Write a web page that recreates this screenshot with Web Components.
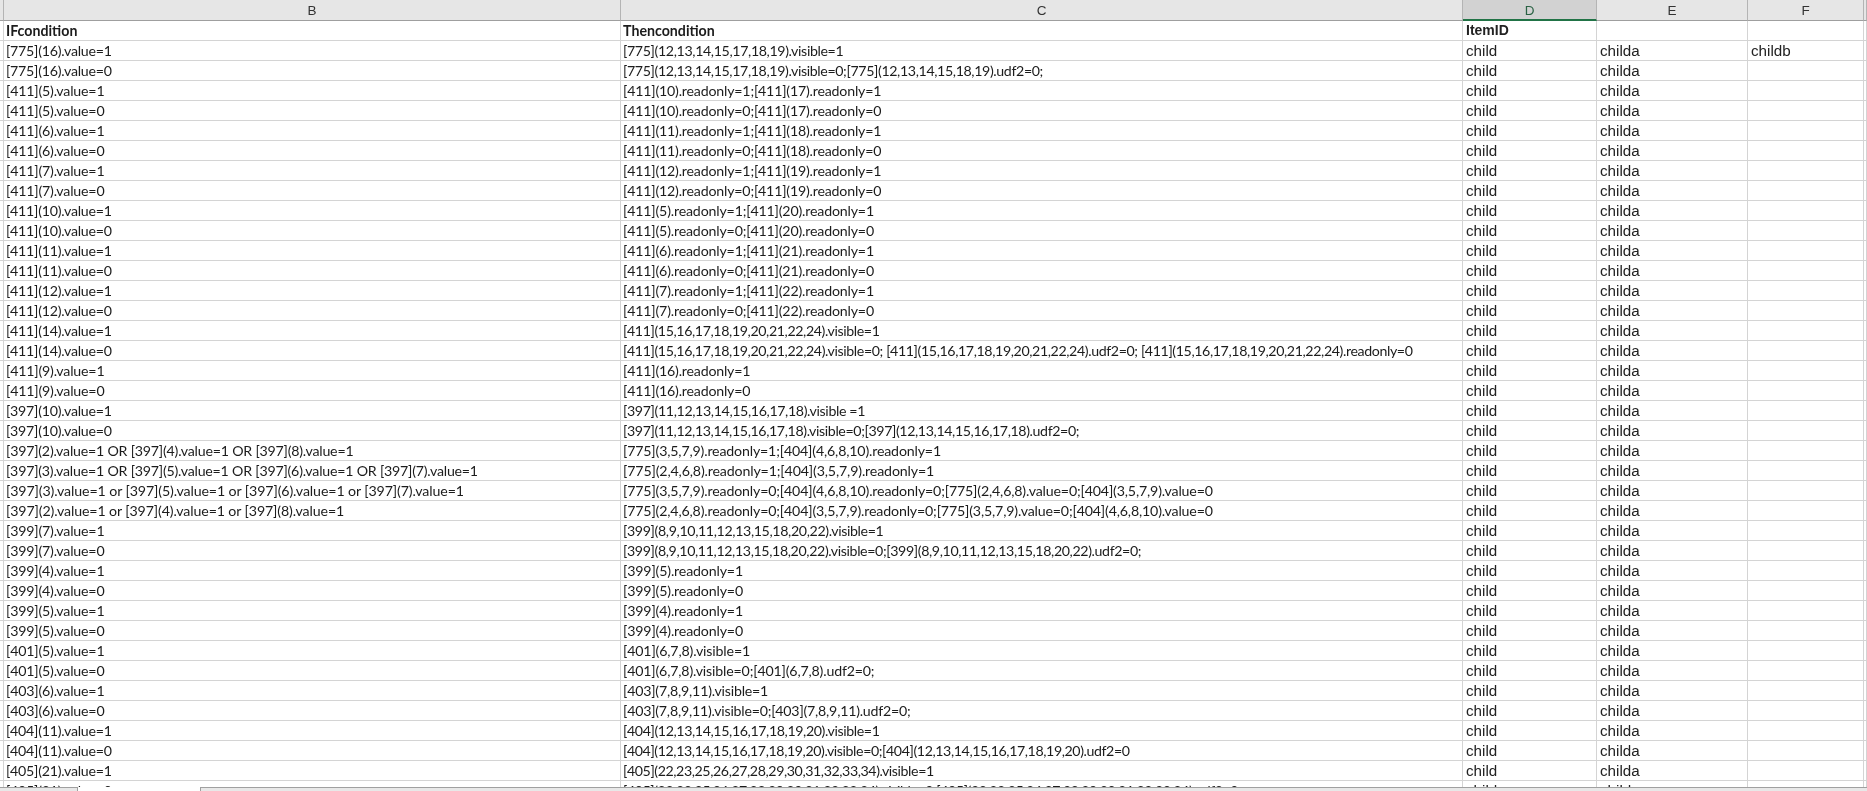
<!DOCTYPE html>
<html><head><meta charset="utf-8"><title>Sheet</title>
<style>html,body{margin:0;padding:0;background:#fff;overflow:hidden}</style>
</head><body>
<x-sheet id="sheet"></x-sheet>
<script>
const COLS = '4px 617px 842px 134px 151px 116px 3px';
class XColHead extends HTMLElement{
  constructor(){super();this.attachShadow({mode:'open'}).innerHTML=`<style>
  :host{display:flex;align-items:center;justify-content:center;box-sizing:border-box;height:21px;padding-top:1px;background:#e6e6e6;border-right:1px solid #b4b4b4;border-bottom:1px solid #9f9f9f;font:13.5px "Liberation Sans",sans-serif;color:#333;filter:blur(.25px)}
  :host([selected]){background:#d2d2d2;color:#2a6244;border-bottom:2px solid #217346}
  </style><slot></slot>`}
}
class XCell extends HTMLElement{
  constructor(){super();this.attachShadow({mode:'open'}).innerHTML=`<style>
  :host{display:block;box-sizing:border-box;height:20px;min-width:0;padding:0 0 0 2px;white-space:nowrap;overflow:hidden;border-right:1px solid #d4d4d4;border-bottom:1px solid #d4d4d4;color:#1c1c1c;font:14.2px/19px Lato,sans-serif}
  :host([bold]){font-weight:700}
  :host([arial]){padding-left:3px;font:15.2px/20px "Liberation Sans",sans-serif;color:#222}
  :host([arial][bold]){font:700 14px/19px "Liberation Sans",sans-serif}
  </style><slot></slot>`}
}
class XRow extends HTMLElement{
  constructor(){super();this.attachShadow({mode:'open'}).innerHTML=`<style>
  :host{display:grid;grid-template-columns:${COLS};height:20px}
  </style><slot></slot>`}
}
class XHeadRow extends HTMLElement{
  constructor(){super();this.attachShadow({mode:'open'}).innerHTML=`<style>
  :host{display:grid;grid-template-columns:${COLS};height:21px;flex:none}
  </style><slot></slot>`}
}
class XTabBar extends HTMLElement{
  constructor(){super();this.attachShadow({mode:'open'}).innerHTML=`<style>
  :host{display:grid;grid-template-columns:78px 122px 1fr;height:4px;flex:none}
  .g{background:#e8e8e8;border-top:1px solid #a0a0a0;border-right:1px solid #a0a0a0}
  .t{background:#fff}
  .r{background:#e8e8e8;border-top:1px solid #a0a0a0;border-left:1px solid #a0a0a0}
  </style><div class="g"></div><div class="t"></div><div class="r"></div>`}
}
const data=[
['[775](16).value=1','[775](12,13,14,15,17,18,19).visible=1','childb'],
['[775](16).value=0','[775](12,13,14,15,17,18,19).visible=0;[775](12,13,14,15,18,19).udf2=0;'],
['[411](5).value=1','[411](10).readonly=1;[411](17).readonly=1'],
['[411](5).value=0','[411](10).readonly=0;[411](17).readonly=0'],
['[411](6).value=1','[411](11).readonly=1;[411](18).readonly=1'],
['[411](6).value=0','[411](11).readonly=0;[411](18).readonly=0'],
['[411](7).value=1','[411](12).readonly=1;[411](19).readonly=1'],
['[411](7).value=0','[411](12).readonly=0;[411](19).readonly=0'],
['[411](10).value=1','[411](5).readonly=1;[411](20).readonly=1'],
['[411](10).value=0','[411](5).readonly=0;[411](20).readonly=0'],
['[411](11).value=1','[411](6).readonly=1;[411](21).readonly=1'],
['[411](11).value=0','[411](6).readonly=0;[411](21).readonly=0'],
['[411](12).value=1','[411](7).readonly=1;[411](22).readonly=1'],
['[411](12).value=0','[411](7).readonly=0;[411](22).readonly=0'],
['[411](14).value=1','[411](15,16,17,18,19,20,21,22,24).visible=1'],
['[411](14).value=0','[411](15,16,17,18,19,20,21,22,24).visible=0; [411](15,16,17,18,19,20,21,22,24).udf2=0; [411](15,16,17,18,19,20,21,22,24).readonly=0'],
['[411](9).value=1','[411](16).readonly=1'],
['[411](9).value=0','[411](16).readonly=0'],
['[397](10).value=1','[397](11,12,13,14,15,16,17,18).visible =1'],
['[397](10).value=0','[397](11,12,13,14,15,16,17,18).visible=0;[397](12,13,14,15,16,17,18).udf2=0;'],
['[397](2).value=1 OR [397](4).value=1 OR [397](8).value=1','[775](3,5,7,9).readonly=1;[404](4,6,8,10).readonly=1'],
['[397](3).value=1 OR [397](5).value=1 OR [397](6).value=1 OR [397](7).value=1','[775](2,4,6,8).readonly=1;[404](3,5,7,9).readonly=1'],
['[397](3).value=1 or [397](5).value=1 or [397](6).value=1 or [397](7).value=1','[775](3,5,7,9).readonly=0;[404](4,6,8,10).readonly=0;[775](2,4,6,8).value=0;[404](3,5,7,9).value=0'],
['[397](2).value=1 or [397](4).value=1 or [397](8).value=1','[775](2,4,6,8).readonly=0;[404](3,5,7,9).readonly=0;[775](3,5,7,9).value=0;[404](4,6,8,10).value=0'],
['[399](7).value=1','[399](8,9,10,11,12,13,15,18,20,22).visible=1'],
['[399](7).value=0','[399](8,9,10,11,12,13,15,18,20,22).visible=0;[399](8,9,10,11,12,13,15,18,20,22).udf2=0;'],
['[399](4).value=1','[399](5).readonly=1'],
['[399](4).value=0','[399](5).readonly=0'],
['[399](5).value=1','[399](4).readonly=1'],
['[399](5).value=0','[399](4).readonly=0'],
['[401](5).value=1','[401](6,7,8).visible=1'],
['[401](5).value=0','[401](6,7,8).visible=0;[401](6,7,8).udf2=0;'],
['[403](6).value=1','[403](7,8,9,11).visible=1'],
['[403](6).value=0','[403](7,8,9,11).visible=0;[403](7,8,9,11).udf2=0;'],
['[404](11).value=1','[404](12,13,14,15,16,17,18,19,20).visible=1'],
['[404](11).value=0','[404](12,13,14,15,16,17,18,19,20).visible=0;[404](12,13,14,15,16,17,18,19,20).udf2=0'],
['[405](21).value=1','[405](22,23,25,26,27,28,29,30,31,32,33,34).visible=1'],
['[405](21).value=0','[405](22,23,25,26,27,28,29,30,31,32,33,34).visible=0;[405](22,23,25,26,27,28,29,30,31,32,33,34).udf2=0'],
];
/* Lato's figures, commas and capitals differ from the reference face: adjust tracking by what a cell holds. */
const count=(t,re)=>(t.match(re)||[]).length;
const tighten=t=>{
  const adj=-.6*count(t,/\d/g)-.1*count(t,/,/g)-.3*count(t,/\d\d(?=[,)])/g)
    +.5*count(t,/(?<!\d)\d,(?=\d(?!\d))/g)-1.5*count(t,/ OR /g)+1.2*count(t,/ or /g);
  return t?(adj/t.length).toFixed(3)+'px':'';
};
class XSheet extends HTMLElement{
  constructor(){super();
    const s=this.attachShadow({mode:'open'});
    s.innerHTML=`<style>
    :host{display:flex;flex-direction:column;width:1867px;height:791px;overflow:hidden;background:#fff}
    .rows{flex:1;min-height:0;overflow:hidden;filter:blur(.3px)}
    </style><x-head-row id="h"></x-head-row><div class="rows" id="r"></div><x-tab-bar></x-tab-bar>`;
    const h=s.getElementById('h');
    ['','B','C','D','E','F',''].forEach(l=>{const c=document.createElement('x-col-head');c.textContent=l;if(l==='D')c.setAttribute('selected','');h.append(c)});
    const r=s.getElementById('r');
    const mk=(t,a=[])=>{const c=document.createElement('x-cell');c.textContent=t;a.forEach(k=>c.setAttribute(k,''));if(!a.length&&t)c.style.letterSpacing=tighten(t);return c};
    const row=(cells)=>{const e=document.createElement('x-row');cells.forEach(c=>e.append(c));r.append(e)};
    row([mk(''),mk('IFcondition',['bold']),mk('Thencondition',['bold']),mk('ItemID',['bold','arial']),mk(''),mk(''),mk('')]);
    data.forEach(d=>row([mk(''),mk(d[0]),mk(d[1]),mk('child',['arial']),mk('childa',['arial']),mk(d[2]||'',['arial']),mk('')]));
  }
}
customElements.define('x-col-head',XColHead);
customElements.define('x-cell',XCell);
customElements.define('x-row',XRow);
customElements.define('x-head-row',XHeadRow);
customElements.define('x-tab-bar',XTabBar);
customElements.define('x-sheet',XSheet);
</script>
</body></html>
